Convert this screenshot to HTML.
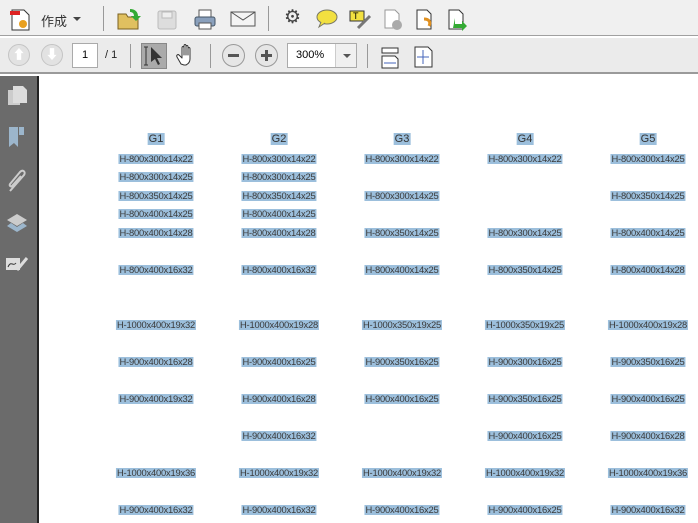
<!DOCTYPE html>
<html><head><meta charset="utf-8"><style>
*{margin:0;padding:0;box-sizing:border-box}
body{width:698px;height:523px;overflow:hidden;background:#fff;font-family:"Liberation Sans","Noto Sans CJK SC",sans-serif;position:relative}
.tb1{position:absolute;left:0;top:0;width:698px;height:36px;background:#f0f0f0;border-bottom:1px solid #a0a0a0}
.tb2{position:absolute;left:0;top:37px;width:698px;height:37px;background:#ebebeb;border-top:1px solid #fff;border-bottom:2px solid #9a9a9a}
.side{position:absolute;left:0;top:76px;width:39px;height:447px;background:#6b6b6b;border-right:2px solid #222}
.sep{position:absolute;width:1px;background:#999}
.ab{position:absolute}
.l{position:absolute;transform:translateX(-50%);font-size:9.4px;letter-spacing:-0.2px;background:#9cbfdc;color:#3a3a3a;line-height:10px;padding:0 1px;white-space:nowrap}
.h{position:absolute;transform:translateX(-50%);font-size:11px;background:#9cbfdc;color:#333;line-height:12px;padding:0 1px}
</style></head><body>
<div class="tb1">
 <svg class="ab" style="left:8px;top:8px" width="24" height="24"><path d="M4 2h12l5 5v15H4z" fill="#fff" stroke="#333"/><rect x="2" y="3" width="10" height="4" fill="#d22"/><circle cx="15" cy="16" r="4" fill="#e8a020"/></svg>
 <div class="ab" style="left:41px;top:11px;font-size:13px;color:#333">作成</div>
 <div class="ab" style="left:73px;top:17px;width:0;height:0;border-left:4px solid transparent;border-right:4px solid transparent;border-top:4px solid #444"></div>
 <div class="sep" style="left:103px;top:6px;height:25px"></div>
 <svg class="ab" style="left:116px;top:7px" width="26" height="24"><path d="M2 7h8l2 3h10v12H2z" fill="#e0c060" stroke="#7a6020"/><path d="M14 2c5 0 8 3 8 7l3 0-5 5-5-5 3 0c0-3-2-4-4-4z" fill="#3a3"/></svg>
 <svg class="ab" style="left:156px;top:9px" width="22" height="22"><rect x="2" y="2" width="18" height="18" rx="2" fill="#ddd" stroke="#bbb"/><rect x="6" y="3" width="10" height="6" fill="#eee" stroke="#bbb"/></svg>
 <svg class="ab" style="left:193px;top:8px" width="24" height="24"><rect x="6" y="2" width="12" height="7" fill="#fff" stroke="#555"/><rect x="2" y="9" width="20" height="9" rx="2" fill="#8aa0bc" stroke="#456"/><rect x="6" y="15" width="12" height="6" fill="#fff" stroke="#555"/></svg>
 <svg class="ab" style="left:230px;top:10px" width="26" height="18"><rect x="1" y="2" width="24" height="14" fill="#f4f4f4" stroke="#555"/><path d="M1 2l12 8 12-8" fill="none" stroke="#555"/></svg>
 <div class="sep" style="left:268px;top:6px;height:25px"></div>
 <div class="ab" style="left:284px;top:8px;font-size:19px;color:#444;line-height:20px">⚙</div>
 <svg class="ab" style="left:316px;top:9px" width="22" height="20"><ellipse cx="11" cy="8" rx="10" ry="7" fill="#f2e040" stroke="#776"/><path d="M5 13l-2 5 6-4" fill="#f2e040" stroke="#776"/></svg>
 <svg class="ab" style="left:348px;top:8px" width="24" height="22"><rect x="2" y="3" width="14" height="10" fill="#f2e040" stroke="#333"/><text x="5" y="11" font-size="9" font-family="Liberation Sans">T</text><path d="M10 20l12-12" stroke="#777" stroke-width="3"/></svg>
 <svg class="ab" style="left:383px;top:9px" width="20" height="22"><path d="M2 1h10l4 4v14H2z" fill="#fff" stroke="#999"/><circle cx="14" cy="16" r="5" fill="#aaa"/></svg>
 <svg class="ab" style="left:415px;top:9px" width="20" height="22"><path d="M2 1h10l4 4v15H2z" fill="#fff" stroke="#333"/><path d="M9 10c5 0 7 3 5 7" fill="none" stroke="#e09020" stroke-width="3"/></svg>
 <svg class="ab" style="left:447px;top:9px" width="22" height="22"><path d="M2 1h10l4 4v15H2z" fill="#fff" stroke="#333"/><path d="M8 9v6h7l0-3 5 5-5 5 0-3h-9z" fill="#3a3"/></svg>
</div>
<div class="tb2">
 <div class="ab" style="left:8px;top:6px;width:22px;height:22px;border-radius:50%;background:#e2e2e2;border:1px solid #c4c4c4;color:#fff;font-size:13px;text-align:center;line-height:20px">⬆</div>
 <div class="ab" style="left:41px;top:6px;width:22px;height:22px;border-radius:50%;background:#e2e2e2;border:1px solid #c4c4c4;color:#fff;font-size:13px;text-align:center;line-height:20px">⬇</div>
 <div class="ab" style="left:72px;top:5px;width:26px;height:25px;background:#fff;border:1px solid #aaa;font-size:11px;text-align:center;line-height:23px">1</div>
 <div class="ab" style="left:105px;top:11px;font-size:11px;color:#222">/ 1</div>
 <div class="sep" style="left:130px;top:6px;height:24px"></div>
 <div class="ab" style="left:141px;top:5px;width:26px;height:26px;background:#aaa;border:1px solid #888"></div>
 <svg class="ab" style="left:142px;top:6px" width="24" height="24"><path d="M4 3v18M2 3h4M2 21h4" stroke="#333" fill="none"/><path d="M9 3l0 15 4-3 3 6 2-1-3-6 5 0z" fill="#333"/></svg>
 <svg class="ab" style="left:175px;top:6px" width="22" height="24"><path d="M6 20l-4-7c-1-2 1-3 2-2l3 3V4c0-2 2-2 2 0v7V2c0-2 2-2 2 0v9V3c0-2 2-2 2 0v8V5c0-2 2-2 2 0v10c0 3-2 5-4 6H9z" fill="#fff" stroke="#333" stroke-linejoin="round"/></svg>
 <div class="sep" style="left:210px;top:6px;height:24px"></div>
 <div class="ab" style="left:222px;top:6px;width:23px;height:23px;border-radius:50%;background:#e6e6e6;border:1px solid #999"><div style="position:absolute;left:5px;top:9px;width:11px;height:3px;background:#555"></div></div>
 <div class="ab" style="left:255px;top:6px;width:23px;height:23px;border-radius:50%;background:#e6e6e6;border:1px solid #999"><div style="position:absolute;left:5px;top:9px;width:11px;height:3px;background:#555"></div><div style="position:absolute;left:9px;top:5px;width:3px;height:11px;background:#555"></div></div>
 <div class="ab" style="left:287px;top:5px;width:70px;height:25px;background:#fff;border:1px solid #aaa;font-size:11px;line-height:23px;padding-left:8px">300%</div>
 <div class="ab" style="left:335px;top:6px;width:21px;height:23px;background:#f0f0f0;border-left:1px solid #ccc"><div style="position:absolute;left:7px;top:10px;border-left:4px solid transparent;border-right:4px solid transparent;border-top:4px solid #555"></div></div>
 <div class="sep" style="left:367px;top:6px;height:24px"></div>
 <svg class="ab" style="left:381px;top:9px" width="20" height="22"><rect x="1" y="1" width="16" height="5" fill="#fff" stroke="#333"/><path d="M1 9h13l3 3v9H1z" fill="#fff" stroke="#333"/><path d="M3 16h12" stroke="#46b"/></svg>
 <svg class="ab" style="left:414px;top:8px" width="20" height="22"><path d="M1 1h13l4 4v16H1z" fill="#fff" stroke="#333"/><path d="M9 4v14M3 11h12" stroke="#46b"/></svg>
</div>
<div class="side">
 <svg class="ab" style="left:6px;top:9px" width="22" height="22"><rect x="2" y="5" width="12" height="15" fill="#ccc"/><path d="M7 1h10l4 4v13H7z" fill="#ddd"/></svg>
 <svg class="ab" style="left:7px;top:50px" width="20" height="22"><path d="M2 1h9v20l-4-4-5 4z" fill="#9cb6cc"/><rect x="12" y="1" width="5" height="8" fill="#9cb6cc"/></svg>
 <svg class="ab" style="left:6px;top:93px" width="22" height="24"><path d="M4 22L18 6c2-3-1-6-4-3L4 15c-1 2 1 3 2 2l9-10" fill="none" stroke="#ccc" stroke-width="2"/></svg>
 <svg class="ab" style="left:5px;top:137px" width="24" height="22"><path d="M12 1l10 6-10 6-10-6z" fill="#ccc"/><path d="M2 13l10 6 10-6-4-3-6 4-6-4z" fill="#9cb6cc"/></svg>
 <svg class="ab" style="left:5px;top:180px" width="24" height="16"><rect x="1" y="2" width="14" height="12" fill="#ddd"/><path d="M12 14l10-12" stroke="#ddd" stroke-width="3"/><path d="M3 11c3-7 5 0 8-4" stroke="#333" fill="none"/></svg>
</div>
<div class="h" style="left:156px;top:133px">G1</div>
<div class="h" style="left:279px;top:133px">G2</div>
<div class="h" style="left:402px;top:133px">G3</div>
<div class="h" style="left:525px;top:133px">G4</div>
<div class="h" style="left:648px;top:133px">G5</div>
<div class="l" style="left:156px;top:154px">H-800x300x14x22</div>
<div class="l" style="left:156px;top:172px">H-800x300x14x25</div>
<div class="l" style="left:156px;top:191px">H-800x350x14x25</div>
<div class="l" style="left:156px;top:209px">H-800x400x14x25</div>
<div class="l" style="left:156px;top:228px">H-800x400x14x28</div>
<div class="l" style="left:156px;top:265px">H-800x400x16x32</div>
<div class="l" style="left:156px;top:320px">H-1000x400x19x32</div>
<div class="l" style="left:156px;top:357px">H-900x400x16x28</div>
<div class="l" style="left:156px;top:394px">H-900x400x19x32</div>
<div class="l" style="left:156px;top:468px">H-1000x400x19x36</div>
<div class="l" style="left:156px;top:505px">H-900x400x16x32</div>
<div class="l" style="left:279px;top:154px">H-800x300x14x22</div>
<div class="l" style="left:279px;top:172px">H-800x300x14x25</div>
<div class="l" style="left:279px;top:191px">H-800x350x14x25</div>
<div class="l" style="left:279px;top:209px">H-800x400x14x25</div>
<div class="l" style="left:279px;top:228px">H-800x400x14x28</div>
<div class="l" style="left:279px;top:265px">H-800x400x16x32</div>
<div class="l" style="left:279px;top:320px">H-1000x400x19x28</div>
<div class="l" style="left:279px;top:357px">H-900x400x16x25</div>
<div class="l" style="left:279px;top:394px">H-900x400x16x28</div>
<div class="l" style="left:279px;top:431px">H-900x400x16x32</div>
<div class="l" style="left:279px;top:468px">H-1000x400x19x32</div>
<div class="l" style="left:279px;top:505px">H-900x400x16x32</div>
<div class="l" style="left:402px;top:154px">H-800x300x14x22</div>
<div class="l" style="left:402px;top:191px">H-800x300x14x25</div>
<div class="l" style="left:402px;top:228px">H-800x350x14x25</div>
<div class="l" style="left:402px;top:265px">H-800x400x14x25</div>
<div class="l" style="left:402px;top:320px">H-1000x350x19x25</div>
<div class="l" style="left:402px;top:357px">H-900x350x16x25</div>
<div class="l" style="left:402px;top:394px">H-900x400x16x25</div>
<div class="l" style="left:402px;top:468px">H-1000x400x19x32</div>
<div class="l" style="left:402px;top:505px">H-900x400x16x25</div>
<div class="l" style="left:525px;top:154px">H-800x300x14x22</div>
<div class="l" style="left:525px;top:228px">H-800x300x14x25</div>
<div class="l" style="left:525px;top:265px">H-800x350x14x25</div>
<div class="l" style="left:525px;top:320px">H-1000x350x19x25</div>
<div class="l" style="left:525px;top:357px">H-900x300x16x25</div>
<div class="l" style="left:525px;top:394px">H-900x350x16x25</div>
<div class="l" style="left:525px;top:431px">H-900x400x16x25</div>
<div class="l" style="left:525px;top:468px">H-1000x400x19x32</div>
<div class="l" style="left:525px;top:505px">H-900x400x16x25</div>
<div class="l" style="left:648px;top:154px">H-800x300x14x25</div>
<div class="l" style="left:648px;top:191px">H-800x350x14x25</div>
<div class="l" style="left:648px;top:228px">H-800x400x14x25</div>
<div class="l" style="left:648px;top:265px">H-800x400x14x28</div>
<div class="l" style="left:648px;top:320px">H-1000x400x19x28</div>
<div class="l" style="left:648px;top:357px">H-900x350x16x25</div>
<div class="l" style="left:648px;top:394px">H-900x400x16x25</div>
<div class="l" style="left:648px;top:431px">H-900x400x16x28</div>
<div class="l" style="left:648px;top:468px">H-1000x400x19x36</div>
<div class="l" style="left:648px;top:505px">H-900x400x16x32</div>
</body></html>
